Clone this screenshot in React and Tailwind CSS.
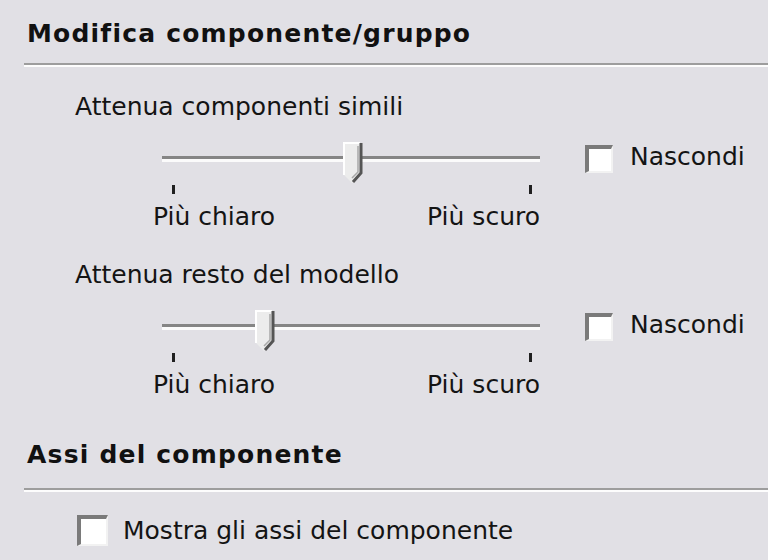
import React from "react";

function Checkbox({ size = 28 }) {
  return (
    <div
      className={
        (size === 28 ? "w-[28px] h-[28px]" : "w-[31px] h-[31px]") +
        " shrink-0 bg-white border-t-[4px] border-l-[4px] border-t-[#7a7a7a] border-l-[#7a7a7a] border-r-[2px] border-b-[2px] border-r-[#f2f2f2] border-b-[#f2f2f2]"
      }
    />
  );
}

function Thumb() {
  return (
    <svg width="20" height="42" viewBox="0 0 20 42">
      <path d="M1 1 H18 V31 L9 41 L1 33 Z" fill="#ececec" />
      <path d="M1 33 V1 H17" stroke="#ffffff" strokeWidth="2" fill="none" />
      <path d="M18 1 V31 L10 40" stroke="#555555" strokeWidth="3" fill="none" />
      <path d="M15 4 V30 L9 36" stroke="#a8a8a8" strokeWidth="1.5" fill="none" />
    </svg>
  );
}

function Slider({ pos }) {
  return (
    <div className="w-[387px] flex flex-col">
      <div className="relative h-[42px]">
        <div className="absolute left-[9px] right-0 top-[14px] flex flex-col">
          <div className="h-[3px] bg-[#858585]" />
          <div className="h-[3px] bg-[#fbfbfb]" />
        </div>
        <div className="absolute top-0" style={{ left: pos }}>
          <Thumb />
        </div>
      </div>
      <div className="flex justify-between pl-[19px] pr-[8px] pt-[1px] h-[18px]">
        <div className="w-[3px] h-[9px] bg-[#202020]" />
        <div className="w-[3px] h-[9px] bg-[#202020]" />
      </div>
      <div className="flex justify-between leading-[30px] text-[25px]">
        <span>Più chiaro</span>
        <span>Più scuro</span>
      </div>
    </div>
  );
}

function Heading({ children }) {
  return (
    <div className="pl-[27px] leading-[32px] text-[25px] font-bold tracking-[1.2px] text-[#111]">
      {children}
    </div>
  );
}

function Separator() {
  return (
    <div className="ml-[24px] flex flex-col">
      <div className="h-[2px] bg-[#9d9d9d]" />
      <div className="h-[2px] bg-[#fdfdfd]" />
    </div>
  );
}

export default function App() {
  return (
    <div className="w-[768px] h-[560px] overflow-hidden bg-[#e1e0e5] text-[#141414] font-['DejaVu_Sans',sans-serif]">
      <div className="flex flex-col pt-[18px]">
        <Heading>Modifica componente/gruppo</Heading>
        <div className="mt-[13px]">
          <Separator />
        </div>

        <div className="mt-[25px] pl-[75px] leading-[30px] text-[25px]">Attenua componenti simili</div>
        <div className="mt-[20px] flex pl-[153px]">
          <Slider pos={190} />
          <div className="ml-[45px] mt-[3px] flex items-start gap-[17px]">
            <Checkbox />
            <span className="leading-[30px] text-[25px] -mt-[3px]">Nascondi</span>
          </div>
        </div>

        <div className="mt-[28px] pl-[75px] leading-[30px] text-[25px]">Attenua resto del modello</div>
        <div className="mt-[20px] flex pl-[153px]">
          <Slider pos={102} />
          <div className="ml-[45px] mt-[3px] flex items-start gap-[17px]">
            <Checkbox />
            <span className="leading-[30px] text-[25px] -mt-[3px]">Nascondi</span>
          </div>
        </div>

        <div className="mt-[39px]">
          <Heading>Assi del componente</Heading>
        </div>
        <div className="mt-[17px]">
          <Separator />
        </div>
        <div className="mt-[23px] pl-[77px] flex items-center gap-[15px]">
          <Checkbox size={31} />
          <span className="leading-[30px] text-[25px]">Mostra gli assi del componente</span>
        </div>
      </div>
    </div>
  );
}
